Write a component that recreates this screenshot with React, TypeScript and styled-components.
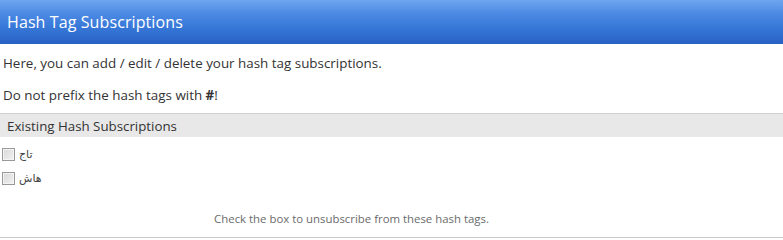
import styled, { createGlobalStyle } from "styled-components";

const GlobalStyle = createGlobalStyle`
  body {
    margin: 0;
    background: #ffffff;
    font-family: "Open Sans", "Noto Sans", sans-serif;
  }
`;

const tags = ["تاج", "هاش"];

const Panel = styled.div`
  width: 783px;
  height: 238px;
  display: flex;
  flex-direction: column;
  border-bottom: 1px solid #c8c8c8;
  box-sizing: border-box;
`;

const Header = styled.div`
  height: 44px;
  display: flex;
  align-items: center;
  padding: 0 7px;
  background: linear-gradient(180deg, #6ea6ef 0%, #4c8ae4 30%, #3576d6 65%, #2861c4 100%);
  color: #ffffff;
  font-size: 16px;
  letter-spacing: 0.1px;
`;

const Para = styled.p`
  margin: 0;
  padding: 0 3px;
  font-size: 13.4px;
  color: #333333;
  line-height: 32px;
`;

const Intro = styled(Para)`
  margin-top: 3px;
`;

const Section = styled.div`
  margin-top: 2px;
  height: 24px;
  box-sizing: border-box;
  display: flex;
  align-items: center;
  padding: 1px 7px 0;
  background: #e8e8e8;
  border-top: 1px solid #d0d0d0;
  font-size: 13.3px;
  color: #333333;
`;

const List = styled.div`
  display: flex;
  flex-direction: column;
  gap: 10px;
  padding: 10px 2px 0;
`;

const Row = styled.label`
  display: flex;
  align-items: center;
  gap: 4px;
  height: 14px;
  font-family: "DejaVu Sans", sans-serif;
  font-size: 11px;
  color: #444444;
`;

const Box = styled.span`
  width: 11px;
  height: 11px;
  border: 1px solid #999999;
  background: linear-gradient(135deg, #d8d8d8 0%, #f2f2f2 100%);
  box-shadow: inset 0 0 0 1px #f4f4f4;
`;

const Note = styled.div`
  margin-top: auto;
  padding: 0 80px 11px 0;
  text-align: center;
  font-size: 11.4px;
  color: #6b6b6b;
`;

export default function App() {
  return (
    <>
      <GlobalStyle />
      <Panel>
        <Header>Hash Tag Subscriptions</Header>
        <Intro>Here, you can add / edit / delete your hash tag subscriptions.</Intro>
        <Para>
          Do not prefix the hash tags with <b>#</b>!
        </Para>
        <Section>Existing Hash Subscriptions</Section>
        <List>
          {tags.map((t) => (
            <Row key={t}>
              <Box />
              <span dir="rtl">{t}</span>
            </Row>
          ))}
        </List>
        <Note>Check the box to unsubscribe from these hash tags.</Note>
      </Panel>
    </>
  );
}
